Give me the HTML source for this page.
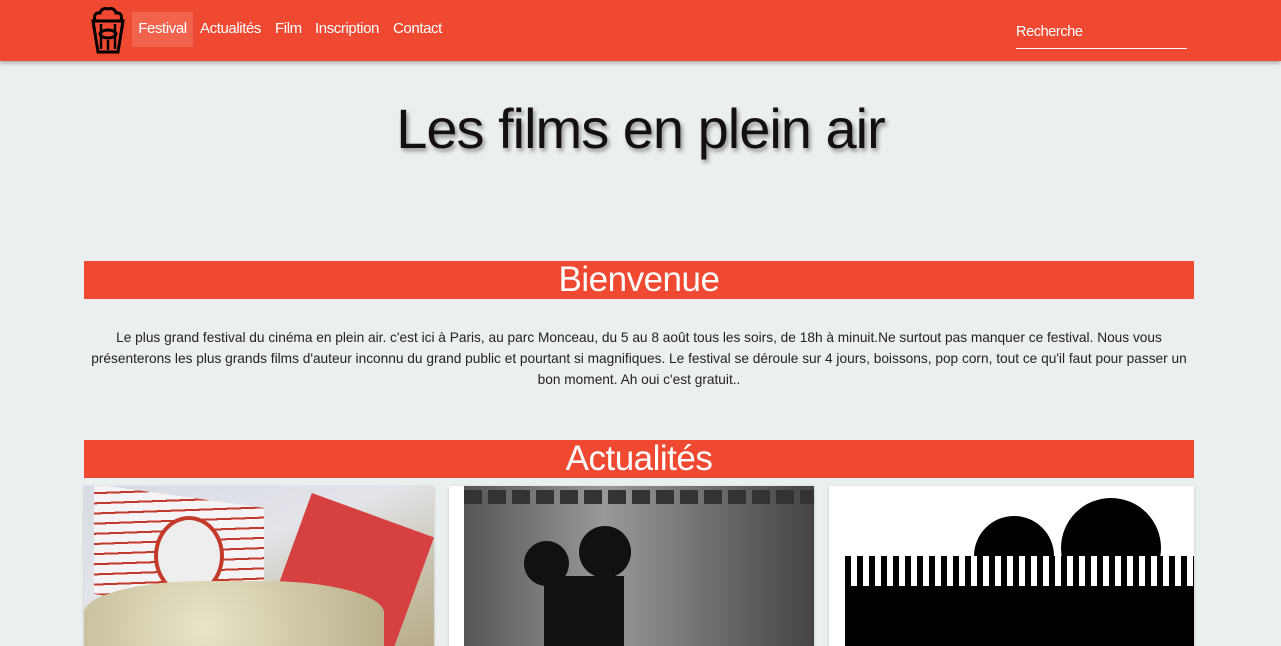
<!DOCTYPE html>
<html><head><meta charset="utf-8"><style>
*{margin:0;padding:0;box-sizing:border-box}
body{width:1281px;height:642px;overflow:hidden;background:#eceff0;font-family:"Liberation Sans",sans-serif;position:relative}
.nav{position:absolute;left:0;top:0;width:1281px;height:61px;background:#f04931;box-shadow:0 2px 4px rgba(0,0,0,.3)}
.nav a{position:absolute;top:12px;height:35px;line-height:34px;color:#fff;font-size:15px;text-decoration:none;letter-spacing:-0.4px}
.search{position:absolute;left:1016px;top:24px;width:171px;height:25px;border-bottom:1px solid #fff;color:#fff;font-size:14.5px;letter-spacing:-0.4px}
h1{position:absolute;top:96px;width:100%;text-align:center;font-weight:300;font-size:56px;color:#111;text-shadow:2px 3px 4px rgba(0,0,0,.4);letter-spacing:-1px}
.bar{position:absolute;left:84px;width:1110px;height:38px;background:#f04931;color:#fff;text-align:center;font-size:35px;line-height:38px;letter-spacing:-0.5px}
p{position:absolute;left:84px;top:327px;width:1110px;text-align:center;font-size:13.7px;line-height:21px;color:#222}
.card{position:absolute;top:486px;height:160px;background:#fff;box-shadow:0 1px 3px rgba(0,0,0,.2);overflow:hidden}
</style></head><body>
<div class="nav">
<svg style="position:absolute;left:90px;top:6px" width="36" height="48" viewBox="0 0 36 48"><path d="M5 15 Q3 6 10 7 Q12 1 18 3 Q24 1 26 7 Q33 6 31 15" fill="none" stroke="#000" stroke-width="3"/><path d="M3 15 H33 L28 46 H8 Z" fill="none" stroke="#000" stroke-width="3"/><path d="M11 18 V43 M25 18 V43 M18 34 V44" stroke="#000" stroke-width="2.5"/><ellipse cx="18" cy="28" rx="8" ry="4" fill="none" stroke="#000" stroke-width="3"/></svg>
<a style="left:132px;width:61px;background:#f2634e;text-align:center">Festival</a>
<a style="left:200px">Actualités</a>
<a style="left:275px">Film</a>
<a style="left:315px">Inscription</a>
<a style="left:393px">Contact</a>
<div class="search">Recherche</div>
</div>
<h1>Les films en plein air</h1>
<div class="bar" style="top:261px">Bienvenue</div>
<p>Le plus grand festival du cinéma en plein air. c'est ici à Paris, au parc Monceau, du 5 au 8 août tous les soirs, de 18h à minuit.Ne surtout pas manquer ce festival. Nous vous présenterons les plus grands films d'auteur inconnu du grand public et pourtant si magnifiques. Le festival se déroule sur 4 jours, boissons, pop corn, tout ce qu'il faut pour passer un bon moment. Ah oui c'est gratuit..</p>
<div class="bar" style="top:440px">Actualités</div>
<div class="card" style="left:84px;width:350px;background:linear-gradient(160deg,#d8dbe3 0%,#e3e4ea 40%,#c9c4b0 70%,#b8ad8a 100%)">
<div style="position:absolute;left:10px;top:10px;width:170px;height:110px;background:repeating-linear-gradient(170deg,#f4f4f6 0 8px,#c43a2a 8px 10px);transform:skewY(8deg)"></div>
<div style="position:absolute;left:70px;top:30px;width:70px;height:80px;border-radius:50%;border:4px solid #c43a2a;background:#eee"></div>
<div style="position:absolute;left:200px;top:25px;width:130px;height:140px;background:#d64040;transform:rotate(20deg)"></div>
<div style="position:absolute;left:0;top:95px;width:300px;height:80px;border-radius:40% 40% 0 0;background:radial-gradient(circle at 40% 60%,#e8e4c8,#b9b08a)"></div>
</div>
<div class="card" style="left:449px;width:365px">
<div style="position:absolute;left:15px;top:0;width:350px;height:160px;background:linear-gradient(90deg,#555 0%,#999 40%,#444 100%)"></div>
<div style="position:absolute;left:15px;top:4px;width:350px;height:14px;background:repeating-linear-gradient(90deg,#333 0 18px,transparent 18px 24px)"></div>
<div style="position:absolute;left:75px;top:55px;width:45px;height:45px;border-radius:50%;background:#111"></div>
<div style="position:absolute;left:130px;top:40px;width:52px;height:52px;border-radius:50%;background:#111"></div>
<div style="position:absolute;left:95px;top:90px;width:80px;height:70px;background:#111"></div>
</div>
<div class="card" style="left:829px;width:365px">
<div style="position:absolute;left:145px;top:30px;width:80px;height:80px;border-radius:50%;background:#000"></div>
<div style="position:absolute;left:232px;top:12px;width:100px;height:100px;border-radius:50%;background:#000"></div>
<div style="position:absolute;left:16px;top:70px;width:349px;height:30px;background:repeating-linear-gradient(90deg,#000 0 6px,#fff 6px 12px)"></div>
<div style="position:absolute;left:16px;top:100px;width:349px;height:60px;background:#000"></div>
</div>
</body></html>
